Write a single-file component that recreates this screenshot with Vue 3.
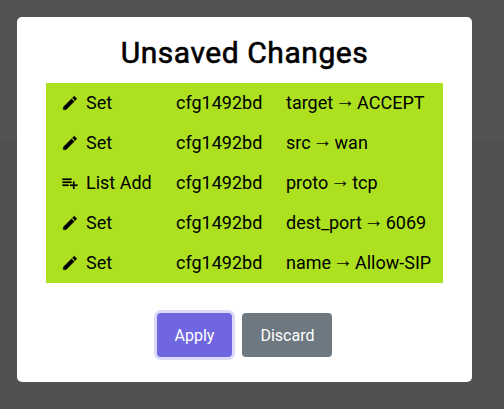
<script setup>
const changes = [
  { op: 'Set', icon: 'edit', section: 'cfg1492bd', key: 'target', value: 'ACCEPT' },
  { op: 'Set', icon: 'edit', section: 'cfg1492bd', key: 'src', value: 'wan' },
  { op: 'List Add', icon: 'add', section: 'cfg1492bd', key: 'proto', value: 'tcp' },
  { op: 'Set', icon: 'edit', section: 'cfg1492bd', key: 'dest_port', value: '6069' },
  { op: 'Set', icon: 'edit', section: 'cfg1492bd', key: 'name', value: 'Allow-SIP' },
]
const paths = {
  edit: 'M3 17.25V21h3.75L17.81 9.94l-3.75-3.75L3 17.25zM20.71 7.04a1 1 0 0 0 0-1.41l-2.34-2.34a1 1 0 0 0-1.41 0l-1.83 1.83 3.75 3.75 1.83-1.83z',
  add: 'M14 10H2v2h12v-2zm0-4H2v2h12V6zm4 8v-4h-2v4h-4v2h4v4h2v-4h4v-2h-4zM2 16h8v-2H2v2z',
}
</script>

<template>
  <div class="backdrop">
    <section class="dialog" role="dialog">
      <h2 class="title">Unsaved Changes</h2>
      <div class="changes">
        <div v-for="(c, i) in changes" :key="i" class="row">
          <svg class="icon" viewBox="0 0 24 24"><path :d="paths[c.icon]" /></svg>
          <span class="op">{{ c.op }}</span>
          <span class="section">{{ c.section }}</span>
          <span class="value">{{ c.key }} <span class="arrow">→</span> {{ c.value }}</span>
        </div>
      </div>
      <div class="actions">
        <button class="btn apply">Apply</button>
        <button class="btn discard">Discard</button>
      </div>
    </section>
  </div>
</template>

<style>
body { margin: 0; }
</style>

<style scoped>
.backdrop {
  box-sizing: border-box;
  height: 409px;
  padding: 17px 32px 27px 17px;
  background: linear-gradient(#535353 140px, #505250 140px);
  font-family: Roboto, "DejaVu Sans", sans-serif;
  color: #000;
}
.dialog {
  box-sizing: border-box;
  height: 365px;
  padding: 16px 29px 0;
  background: #fff;
  border-radius: 5px;
}
.title {
  margin: 0;
  height: 50px;
  line-height: 40px;
  font-size: 30px;
  font-weight: 400;
  letter-spacing: 0.55px;
  -webkit-text-stroke: 0.6px #000;
  text-align: center;
}
.changes { background: #ade120; }
.row {
  box-sizing: border-box;
  display: grid;
  grid-template-columns: 25.5px 90px 110px 1fr;
  align-items: center;
  height: 40px;
  padding: 0 0 1px 14.5px;
  font-size: 18px;
  line-height: 27px;
  white-space: nowrap;
}
.icon {
  width: 18px;
  height: 18px;
  stroke: #000;
  stroke-width: 0.3;
}
.value { word-spacing: -2.5px; }
.arrow {
  font-family: "Liberation Serif", serif;
  font-size: 20px;
  line-height: 1;
  vertical-align: 2px;
}
.actions {
  display: flex;
  justify-content: center;
  gap: 10px;
  margin-top: 30px;
}
.btn {
  height: 44px;
  padding: 0 18px;
  border: 0;
  border-radius: 4px;
  font: 16px Roboto, sans-serif;
  color: #fff;
}
.apply { background: #7066e0; box-shadow: 0 0 0 3px rgba(112, 102, 224, 0.24); }
.discard { background: #6e7881; }
</style>
